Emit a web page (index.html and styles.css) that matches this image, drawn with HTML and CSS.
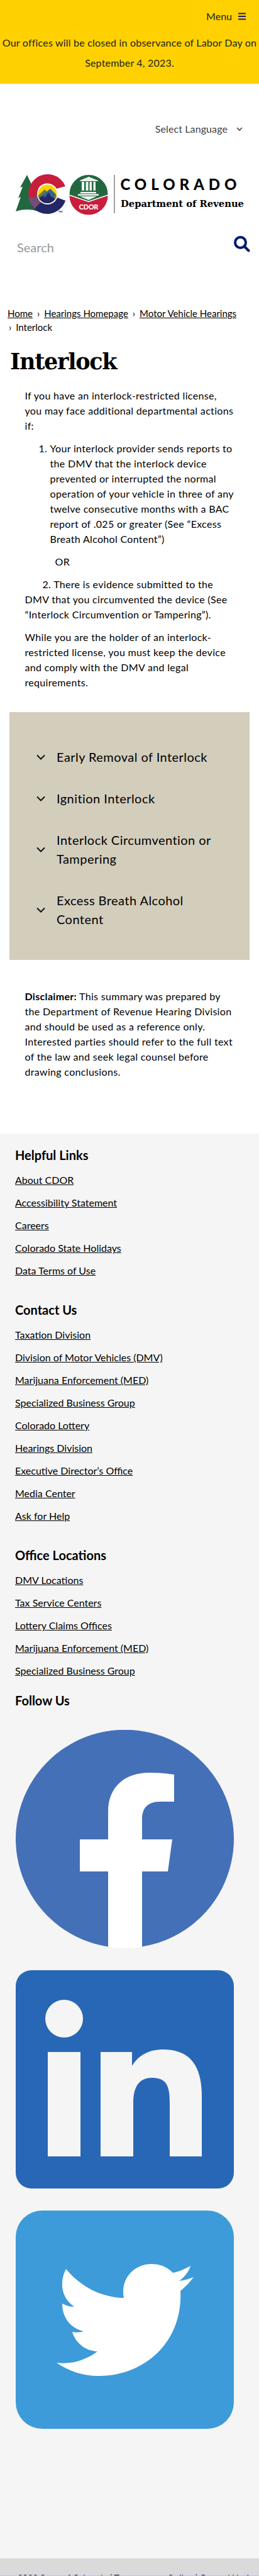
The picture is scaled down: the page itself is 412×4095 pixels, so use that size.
FILE: index.html
```html
<!DOCTYPE html>
<html lang="en">
<head>
<meta charset="utf-8">
<title>Interlock | Department of Revenue</title>
<link rel="stylesheet" href="styles.css">
</head>
<body>
<header>
  <div class="alert">
    <div class="menu"><span>Menu</span><svg width="12" height="12" viewBox="0 0 12 12"><path d="M0 1.5h12M0 6h12M0 10.5h12" stroke="#20205a" stroke-width="2"/></svg></div>
    <p>Our offices will be closed in observance of Labor Day on<br>September 4, 2023.</p>
  </div>
  <div class="language"><span>Select Language</span><svg width="10" height="7" viewBox="0 0 10 7"><path d="M1 1l4 4 4-4" fill="none" stroke="#444" stroke-width="1.6"/></svg></div>
  <svg class="logo" width="412" height="70" viewBox="0 0 412 70">
    <path d="M43 5l-11 20 4-1-7 18 4-2-8 23q18-6 36 0l8-10V30L51 22z" fill="#236740"/>
    <path d="M104 23A30.500 30.500 0 1 0 104 46L91 42A17 17 0 1 1 90 27z" fill="#c81e3c"/>
    <path d="M50 54A30.500 30.500 0 0 0 104 46L91 41Q78 54 64 46z" fill="#232766"/>
    <path d="M45 42q5 12 10 17l12-13-7-9-7 4z" fill="#754d75"/>
    <circle cx="75.500" cy="35.500" r="16.500" fill="#fff"/>
    <circle cx="75.500" cy="35.500" r="15" fill="#ffd100"/>
    <path d="M60.600 38L71 28l5 5 4-4 10 9a15 15 0 0 1-29.400 0z" fill="#6b793b"/>
    <path d="M69 36l11-9 9 9-7 8H63z" fill="#326493"/>
    <path d="M62 42l6-4 4 3 5-8 4 6 7 4a15 15 0 0 1-26-1z" fill="#232766"/>
    <text x="93" y="65" font-family="Lato" font-size="4" font-weight="700">TM</text>
    <circle cx="141" cy="35.500" r="30.500" fill="#236740"/>
    <path d="M110.500 38L141 48l30.500-10A30.500 30.500 0 0 1 110.500 38z" fill="#c81e3c"/>
    <path d="M110 37l31 10.500L172 37" fill="none" stroke="#fff" stroke-width="1.600"/>
    <path d="M127 14L141 8l15 6v1h-29zM130 16h4v14h-4zM136.500 16h4v14h-4zM142.500 16h3.500v14h-3.500zM148.500 16h3.500v14h-3.500zM128 32h25v2.500h-25zM124 35.500h33V38h-33zM127 39h27l-13 6z" fill="#eef6f1"/>
    <text x="141" y="59.500" text-anchor="middle" textLength="31" font-family="Lato" font-size="11" font-weight="900" fill="#fff">CDOR</text>
    <path d="M182 5v61" stroke="#8b8b8b" stroke-width="1.600"/>
    <text x="191.500" y="29" textLength="185" font-family="Lato" font-size="24" font-weight="900">COLORADO</text>
    <text x="192" y="55.500" textLength="196" lengthAdjust="spacingAndGlyphs" font-family="DejaVu Serif" font-size="15" font-weight="700">Department of Revenue</text>
  </svg>
  <div class="search"><span>Search</span><svg width="26" height="26" viewBox="0 0 26 26"><circle cx="10.500" cy="10.500" r="8.500" fill="none" stroke="#001970" stroke-width="4"/><path d="M16.500 16.500l7 7" stroke="#001970" stroke-width="4" stroke-linecap="round"/></svg></div>
</header>
<main>
  <nav class="crumbs"><a>Home</a><i>›</i><a>Hearings Homepage</a><i>›</i><a>Motor Vehicle Hearings</a><br><i class="first">›</i>Interlock</nav>
  <h1>Interlock</h1>
  <div class="copy">
    <p>If you have an interlock-restricted license,<br>you may face additional departmental actions<br>if:</p>
    <ol><li>Your interlock provider sends reports to<br>the DMV that the interlock device<br>prevented or interrupted the normal<br>operation of your vehicle in three of any<br>twelve consecutive months with a BAC<br>report of .025 or greater (See “Excess<br>Breath Alcohol Content”)</li></ol>
    <p class="or">OR</p>
    <p class="second">2. There is evidence submitted to the<br>DMV that you circumvented the device (See<br>“Interlock Circumvention or Tampering”).</p>
    <p>While you are the holder of an interlock-<br>restricted license, you must keep the device<br>and comply with the DMV and legal<br>requirements.</p>
  </div>
  <section class="accordion">
    <div class="item"><svg class="chev" viewBox="0 0 14 9"><path d="M1 1.500l6 6 6-6"/></svg><span>Early Removal of Interlock</span></div>
    <div class="item"><svg class="chev" viewBox="0 0 14 9"><path d="M1 1.500l6 6 6-6"/></svg><span>Ignition Interlock</span></div>
    <div class="item"><svg class="chev" viewBox="0 0 14 9"><path d="M1 1.500l6 6 6-6"/></svg><span>Interlock Circumvention or<br>Tampering</span></div>
    <div class="item"><svg class="chev" viewBox="0 0 14 9"><path d="M1 1.500l6 6 6-6"/></svg><span>Excess Breath Alcohol<br>Content</span></div>
  </section>
  <p class="copy disclaimer"><b>Disclaimer:</b> This summary was prepared by<br>the Department of Revenue Hearing Division<br>and should be used as a reference only.<br>Interested parties should refer to the full text<br>of the law and seek legal counsel before<br>drawing conclusions.</p>
</main>
<footer>
  <section class="links"><h2>Helpful Links</h2><a>About CDOR</a><a>Accessibility Statement</a><a>Careers</a><a>Colorado State Holidays</a><a>Data Terms of Use</a></section>
  <section class="links"><h2>Contact Us</h2><a>Taxation Division</a><a>Division of Motor Vehicles (DMV)</a><a>Marijuana Enforcement (MED)</a><a>Specialized Business Group</a><a>Colorado Lottery</a><a>Hearings Division</a><a>Executive Director’s Office</a><a>Media Center</a><a>Ask for Help</a></section>
  <section class="links last"><h2>Office Locations</h2><a>DMV Locations</a><a>Tax Service Centers</a><a>Lottery Claims Offices</a><a>Marijuana Enforcement (MED)</a><a>Specialized Business Group</a></section>
  <section class="social">
    <h2>Follow Us</h2>
    <svg viewBox="0 0 347 347"><path d="M146 344.500A173.500 173.500 0 1 1 201 344.500z" fill="#4470b8"/><path d="M147 345V225h-45v-51h45v-44c0-40 27-62 66-62 14 0 26 1 39 3v43h-22c-22 0-29 12-29 28v32h48l-7 51h-41v120q-27 4-54 0z" fill="#fff"/></svg>
    <svg viewBox="0 0 347 347"><rect width="347" height="347" rx="25" fill="#2867b5"/><g fill="#f5f5f5"><circle cx="77" cy="77" r="30"/><path d="M51 130h52v166H51zM135 130h50v22c10-17 28-26 49-26 47 0 62 30 62 75v95h-51v-84c0-25-3-41-28-41-24 0-30 19-30 41v84h-52z"/></g></svg>
    <svg viewBox="0 0 347 347"><rect width="347" height="347" rx="42" fill="#3d9bd9"/><path d="M65 242c24 3 46-4 65-18-20-1-35-14-40-31 6 1 12 1 18-1-21-5-34-22-34-44 6 3 12 5 19 5-19-13-25-37-13-60 23 28 56 45 92 46-6-30 16-54 44-54 14 0 25 5 34 14 10-2 19-6 28-11-3 10-10 18-18 24 8-1 15-3 23-6-6 8-13 15-21 22 4 82-58 135-130 135-26 0-48-8-67-21z" fill="#fff"/></svg>
  </section>
  <div class="legal"><div class="copyright">2023 State of Colorado | Transparency Online | General Notices</div></div>
</footer>
</body>
</html>
```
FILE: styles.css
```css
* { box-sizing: border-box; }
body { margin: 0; width: 412px; height: 4095px; overflow: hidden; background: #fff; color: #000; font: 16px/24px Lato, sans-serif; display: flex; flex-direction: column; }
p { margin: 0; }
svg { display: block; flex: none; }
a { text-decoration: underline; }
header { height: 485px; }
.alert { height: 133px; background: #ffd100; color: #222; padding-top: 13px; }
.menu { display: flex; justify-content: flex-end; align-items: center; gap: 10px; padding-right: 21px; height: 25px; }
.alert p { text-align: center; line-height: 32px; margin-top: 14px; white-space: nowrap; letter-spacing: .2px; }
.language { height: 145px; padding: 60px 26px 0 0; display: flex; justify-content: flex-end; gap: 14px; color: #444; letter-spacing: .1px; }
.language svg { margin-top: 9px; }
.search { display: flex; justify-content: space-between; padding: 32px 14px 0 27px; color: #999; font-size: 20px; line-height: 36px; }
.logo { margin-top: -5px; }
.crumbs { padding: 2px 0 0 12px; font-size: 15px; line-height: 22px; height: 63px; white-space: nowrap; }
.crumbs i { font-style: normal; margin: 0 7px; }
.crumbs .first { margin-left: 2px; }
h1 { margin: 0 0 0 16px; height: 69px; font: 700 35px/54px "DejaVu Serif", serif; letter-spacing: -1.3px; }
.copy { padding-left: 39.5px; white-space: nowrap; letter-spacing: .32px; }
.copy p { margin-bottom: 12px; }
ol { margin: 0 0 12px; padding-left: 40px; }
.or { padding-left: 48px; }
.second { text-indent: 28px; }
.accordion { margin: 35px 15px 0; height: 394px; background: #d3cdbc; padding: 56px 0 0 43px; display: flex; flex-direction: column; gap: 36px; font-size: 20px; line-height: 30px; letter-spacing: .45px; }
.item { display: flex; align-items: center; gap: 18px; }
.chev { width: 14px; height: 9px; fill: none; stroke: #111; stroke-width: 2; }
.disclaimer { margin-top: 46px; height: 230px; }
footer { background: #f5f5f5; flex: 1; }
h2 { margin: 0; font: 700 20px/28px Lato, sans-serif; }
.links { padding: 20px 24px 0; height: 246px; display: flex; flex-direction: column; align-items: flex-start; gap: 12px; }
.links h2 { margin-bottom: 2px; }
.links:nth-child(2) { height: 390px; }
.links.last { height: 237px; }
.social { padding: 14px 25px 0 24px; display: flex; flex-direction: column; gap: 35px; height: 1392px; }
.social h2 { margin-bottom: -2px; }
.social svg { width: 347px; height: 347px; margin-left: 1px; }
.legal { height: 28px; overflow: hidden; background: #dadada; border-bottom: 1px solid #ffd100; }
.copyright { padding: 19px 24px 0 28px; text-align: center; white-space: nowrap; font-size: 14px; }
```
